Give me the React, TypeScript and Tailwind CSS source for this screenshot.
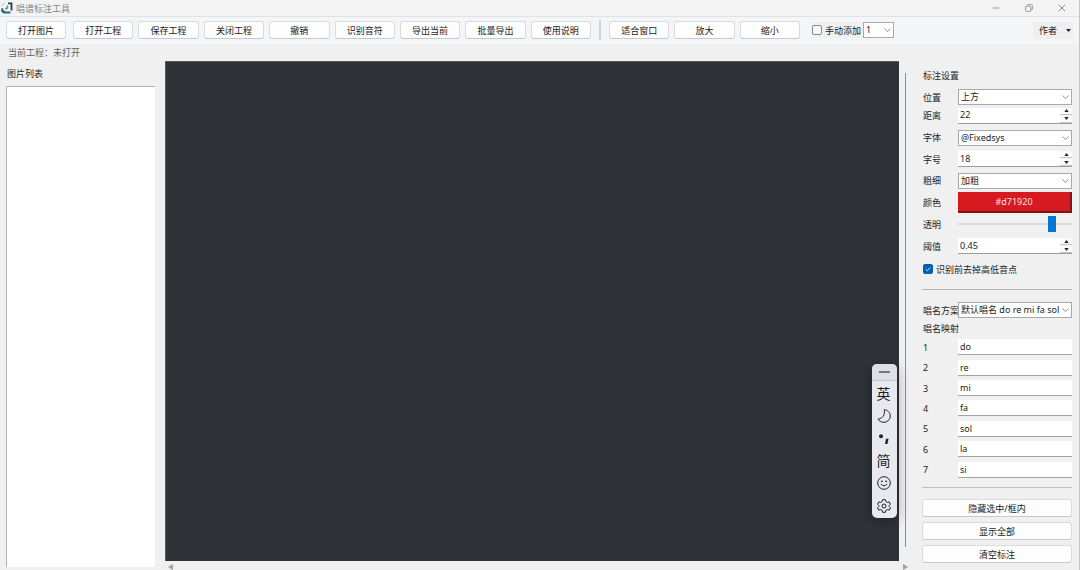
import React, { useState } from 'react';

const TOOLBAR = ['打开图片', '打开工程', '保存工程', '关闭工程', '撤销', '识别音符', '导出当前', '批量导出', '使用说明'];
const VIEW_ACTIONS = ['适合窗口', '放大', '缩小'];
const NOTES = ['do', 're', 'mi', 'fa', 'sol', 'la', 'si'];

const ToolButton: React.FC<{ label: string }> = ({ label }) => (
    <button className="h-[18px] w-full rounded-[3px] border border-[#dadbdc] border-b-[#c8c9ca] bg-[#fdfdfd] leading-none whitespace-nowrap hover:bg-gray-50">
        {label}
    </button>
);

const SelectBox: React.FC<{ id?: string; label?: string; options: string[] }> = ({ id, label, options }) => (
    <div className="relative">
        <select
            id={id}
            aria-label={label}
            className="block h-4 w-full appearance-none overflow-hidden border border-[#a9a9a9] bg-white pl-[2px] pr-3 leading-[14px] outline-none"
        >
            {options.map((o) => (
                <option key={o}>{o}</option>
            ))}
        </select>
        <svg className="pointer-events-none absolute right-[3px] top-[5px] h-[6px] w-[7px]" viewBox="0 0 7 6" fill="none" stroke="#777" strokeWidth="0.8">
            <path d="M0.5 1.5 3.5 4.5 6.5 1.5" />
        </svg>
    </div>
);

const SpinBox: React.FC<{ id: string; initial: number; step: number }> = ({ id, initial, step }) => {
    const [value, setValue] = useState(String(initial));
    const bump = (delta: number) => setValue(String(Math.round((Number(value) + delta) * 100) / 100));

    return (
        <div className="flex h-4 border-b border-[#9c9c9c] bg-white">
            <input
                id={id}
                value={value}
                onChange={(e) => setValue(e.target.value)}
                className="min-w-0 flex-1 pl-[2px] pb-px leading-none outline-none"
            />
            <div className="flex w-3 flex-col gap-px bg-[#f0f0f0]">
                <button aria-label="增加" onClick={() => bump(step)} className="flex h-[7px] items-center justify-center border-b border-[#c6c6c6] bg-[#fafafa]">
                    <svg className="h-[3px] w-[5px]" viewBox="0 0 5 3"><path d="M2.5 0 4.7 3H0.3Z" fill="#222" /></svg>
                </button>
                <button aria-label="减少" onClick={() => bump(-step)} className="flex h-[7px] items-center justify-center border-b border-[#c6c6c6] bg-[#fafafa]">
                    <svg className="h-[3px] w-[5px]" viewBox="0 0 5 3"><path d="M2.5 3 4.7 0H0.3Z" fill="#222" /></svg>
                </button>
            </div>
        </div>
    );
};

const Field: React.FC<{ id: string; label: string; children: React.ReactNode }> = ({ id, label, children }) => (
    <div className="grid grid-cols-[36px_minmax(0,1fr)] items-center">
        <label htmlFor={id} className="pl-px whitespace-nowrap">{label}</label>
        {children}
    </div>
);

const TitleBar: React.FC = () => (
    <header className="flex h-[17px] items-center border-b border-[#dfe1e4] bg-[#f3f3f3] pl-px">
        <svg className="h-3 w-3" viewBox="0 0 12 12">
            <path d="M7 0.4H11.4V8.6H9.6V2.2H7Z" fill="#173f5c" />
            <path d="M0.3 6.2H2.2C2.2 8.4 3.6 9.4 5.4 9.4H9.4V11.6H2.6L0.3 9.8Z" fill="#1b6f86" />
            <path d="M1 4C1.4 2.6 2.4 1.6 3.8 1.4" fill="none" stroke="#a9bcc6" strokeWidth="0.8" />
            <path d="M6.2 6.4V3.8L7.4 4.6" fill="none" stroke="#54565a" strokeWidth="0.9" />
            <circle cx="5.4" cy="6.4" r="1" fill="#7d5555" />
        </svg>
        <h1 className="flex-1 pl-[3px] leading-none text-[#858585]">唱谱标注工具</h1>
        <div className="flex items-center pr-px">
            <button aria-label="最小化" className="flex w-[33px] justify-center">
                <svg className="h-2 w-2" viewBox="0 0 8 8" stroke="#909090" strokeWidth="0.9"><path d="M0.7 4h6.6" /></svg>
            </button>
            <button aria-label="还原" className="flex w-[33px] justify-center">
                <svg className="h-2 w-2" viewBox="0 0 8 8" fill="none" stroke="#909090" strokeWidth="0.9">
                    <rect x="0.6" y="2.2" width="5.2" height="5.2" rx="0.8" />
                    <path d="M2.4 2V1.4Q2.4 0.6 3.2 0.6H6.4Q7.4 0.6 7.4 1.6V5Q7.4 5.8 6.6 5.8H6" />
                </svg>
            </button>
            <button aria-label="关闭" className="flex w-[33px] justify-center">
                <svg className="h-2 w-2" viewBox="0 0 8 8" stroke="#808080" strokeWidth="0.9"><path d="M0.8 0.8 7.2 7.2M7.2 0.8 0.8 7.2" /></svg>
            </button>
        </div>
    </header>
);

const Toolbar: React.FC = () => (
    <nav className="flex h-[27px] items-center bg-[#f4f5f7] px-[6px] pb-px">
        <div className="w-[60px]">
            <ToolButton label={TOOLBAR[0]} />
        </div>
        <div className="ml-[7px] grid w-[518px] grid-cols-8 gap-[5px]">
            {TOOLBAR.slice(1).map((label) => (
                <ToolButton key={label} label={label} />
            ))}
        </div>
        <div className="mx-2 h-5 w-[2px] bg-[#d2d3d5]" />
        <div className="grid w-[191px] grid-cols-3 gap-[5px]">
            {VIEW_ACTIONS.map((label) => (
                <ToolButton key={label} label={label} />
            ))}
        </div>
        <label className="ml-[11px] flex h-4 items-center gap-[3px] bg-[#f0f0f0] pl-px pr-[2px] whitespace-nowrap">
            <input type="checkbox" className="h-[10px] w-[10px] appearance-none rounded-[2px] border border-[#8c8c8c] bg-[#f7f7f7] checked:bg-[#005fb8]" />
            手动添加
        </label>
        <div className="w-[31px]">
            <SelectBox label="音符" options={['1', '2', '3', '4', '5', '6', '7']} />
        </div>
        <button className="ml-auto flex h-[17px] items-center gap-[9px] bg-[#efefef] pl-[6px] pr-[2px]">
            作者
            <svg className="h-[3px] w-[5px]" viewBox="0 0 5 3"><path d="M0 0H5L2.5 3Z" fill="#222" /></svg>
        </button>
    </nav>
);

const ImeBar: React.FC = () => (
    <div className="absolute bottom-[43px] right-[2px] z-10 flex h-[154px] w-[25px] flex-col rounded-[5px] bg-[#e7e9ee] text-[14px] text-[#1d1d1f] shadow-[0_3px_14px_rgba(0,0,0,0.32)]">
        <div className="flex h-[17px] items-center justify-center rounded-t-[5px] border-b border-[#c3c7cd] bg-[#dde0e6]">
            <div className="h-[2px] w-[11px] bg-[#74787d]" />
        </div>
        <div className="grid flex-1 auto-rows-fr pb-px pt-[2px] pr-[2px]">
            <button className="flex items-center justify-center leading-none">英</button>
            <button aria-label="半角" className="flex items-center justify-center">
                <svg className="h-[14px] w-[14px]" viewBox="0 0 14 14" fill="none" stroke="#222" strokeWidth="1" strokeLinejoin="round">
                    <path d="M7.2 0.7C10.6 0.9 13.3 3.6 13.3 7A6.3 6.3 0 0 1 7 13.3C4.4 13.3 2.2 12.2 0.9 10C4.8 9.8 8.6 6.4 7.2 0.7Z" />
                </svg>
            </button>
            <button aria-label="标点" className="flex items-center justify-center">
                <svg className="h-[14px] w-[14px]" viewBox="0 0 14 14" fill="#222">
                    <circle cx="4" cy="4.2" r="2" />
                    <path d="M9 6.8h2.6L10.4 12H8Z" />
                </svg>
            </button>
            <button className="flex items-center justify-center leading-none">简</button>
            <button aria-label="表情" className="flex items-center justify-center">
                <svg className="h-[14px] w-[14px]" viewBox="0 0 14 14" fill="none" stroke="#222" strokeWidth="1">
                    <circle cx="7" cy="7" r="6.3" />
                    <path d="M4 8.3Q7 11.6 10 8.3" strokeLinecap="round" />
                    <circle cx="4.9" cy="5.3" r="0.9" fill="#222" stroke="none" />
                    <circle cx="9.1" cy="5.3" r="0.9" fill="#222" stroke="none" />
                </svg>
            </button>
            <button aria-label="设置" className="flex items-center justify-center">
                <svg className="h-[14px] w-[14px]" viewBox="0 0 14 14" fill="none" stroke="#222" strokeWidth="1" strokeLinejoin="round">
                    <path d="M5.6 0.7H8.4L8.9 2.6 10.3 3.4 12.2 2.9 13.5 5.2 12.1 6.6V7.4L13.5 8.8 12.2 11.1 10.3 10.6 8.9 11.4 8.4 13.3H5.6L5.1 11.4 3.7 10.6 1.8 11.1 0.5 8.8 1.9 7.4V6.6L0.5 5.2 1.8 2.9 3.7 3.4 5.1 2.6Z" />
                    <circle cx="7" cy="7" r="2" />
                </svg>
            </button>
        </div>
    </div>
);

const SettingsPanel: React.FC = () => (
    <aside className="w-[157px] shrink-0 pr-[7px]">
        <h2 className="flex h-7 items-center pl-px">标注设置</h2>
        <Field id="position" label="位置">
            <SelectBox id="position" options={['上方', '下方']} />
        </Field>
        <div className="grid h-[152px] auto-rows-fr">
            <Field id="distance" label="距离">
                <SpinBox id="distance" initial={22} step={1} />
            </Field>
            <Field id="font" label="字体">
                <SelectBox id="font" options={['@Fixedsys']} />
            </Field>
            <Field id="size" label="字号">
                <SpinBox id="size" initial={18} step={1} />
            </Field>
            <Field id="weight" label="粗细">
                <SelectBox id="weight" options={['加粗', '常规']} />
            </Field>
            <Field id="color" label="颜色">
                <button id="color" className="h-[21px] border-b-2 border-r-2 border-[#7c1418] bg-[#d71920] leading-none text-[#fbe3e4]">#d71920</button>
            </Field>
            <Field id="opacity" label="透明">
                <input
                    id="opacity"
                    type="range"
                    defaultValue={85}
                    className="h-4 w-full appearance-none bg-[linear-gradient(#dcdcdc,#dcdcdc)] bg-[length:100%_2px] bg-center bg-no-repeat [&::-webkit-slider-thumb]:h-4 [&::-webkit-slider-thumb]:w-2 [&::-webkit-slider-thumb]:appearance-none [&::-webkit-slider-thumb]:bg-[#0078d7]"
                />
            </Field>
            <Field id="threshold" label="阈值">
                <SpinBox id="threshold" initial={0.45} step={0.05} />
            </Field>
        </div>
        <label className="flex h-6 items-center gap-[3px] pl-px whitespace-nowrap">
            <span className="relative flex">
                <input type="checkbox" defaultChecked className="peer h-[10px] w-[10px] appearance-none rounded-[2px] border border-[#8c8c8c] bg-white checked:border-[#005fb8] checked:bg-[#005fb8]" />
                <svg className="pointer-events-none absolute inset-0 hidden h-[10px] w-[10px] peer-checked:block" viewBox="0 0 10 10" fill="none" stroke="#d5e6f5" strokeWidth="0.9">
                    <path d="M2.6 5.2 4.3 6.8 7.5 3.4" />
                </svg>
            </span>
            识别前去掉高低音点
        </label>
        <hr className="mt-2 border-[#b4b4b4]" />
        <div className="mt-[10px] grid h-5">
            <Field id="scheme" label="唱名方案">
                <SelectBox id="scheme" options={['默认唱名 do re mi fa sol']} />
            </Field>
        </div>
        <h2 className="flex h-[17px] items-center pl-px">唱名映射</h2>
        <div className="grid h-[143px] auto-rows-fr">
            {NOTES.map((note, i) => (
                <Field key={note} id={`note-${i}`} label={String(i + 1)}>
                    <input id={`note-${i}`} defaultValue={note} className="h-4 w-full border-b border-[#a3a3a3] bg-white pl-[2px] leading-none outline-none" />
                </Field>
            ))}
        </div>
        <hr className="mt-[7px] border-[#c0c0c0]" />
        <div className="mt-[11px] grid gap-[5px]">
            <ToolButton label="隐藏选中/框内" />
            <ToolButton label="显示全部" />
            <ToolButton label="清空标注" />
        </div>
    </aside>
);

const App: React.FC = () => {
    return (
        <div className="flex h-screen flex-col overflow-hidden border-r border-[#c4c4c4] bg-[#f0f0f0] font-['Noto_Sans','Noto_Sans_CJK_SC',sans-serif] text-[9px] leading-none text-[#1c1c1c]">
            <TitleBar />
            <Toolbar />
            <p className="flex h-[17px] shrink-0 items-center pl-2 text-[#606060]">当前工程：未打开</p>

            <main className="flex min-h-0 flex-1">
                {/* Image list */}
                <section className="flex w-[165px] shrink-0 flex-col pb-[3px] pl-[6px] pr-[10px]">
                    <h2 className="flex h-[25px] items-center pl-px">图片列表</h2>
                    <ul className="flex-1 border-l border-t border-[#b5b5b5] bg-white" />
                </section>

                {/* Canvas */}
                <section className="flex min-w-0 flex-1 flex-col">
                    <div className="relative flex-1 border-l border-t border-[#555a5d] bg-[#2f3237]">
                        <ImeBar />
                    </div>
                    <div className="flex h-[9px] items-end justify-between pl-[3px]">
                        <svg className="h-[6px] w-[5px]" viewBox="0 0 5 6"><path d="M5 0V6L0 3Z" fill="#a0a0a0" /></svg>
                        <svg className="-mr-[9px] h-[6px] w-[5px]" viewBox="0 0 5 6"><path d="M0 0V6L5 3Z" fill="#a0a0a0" /></svg>
                    </div>
                </section>

                {/* Splitter */}
                <div className="flex w-[23px] shrink-0 pb-[23px] pl-[6px] pt-3">
                    <div className="w-px bg-[#8f8f8f]" />
                </div>

                <SettingsPanel />
            </main>
        </div>
    );
};

export default App;
